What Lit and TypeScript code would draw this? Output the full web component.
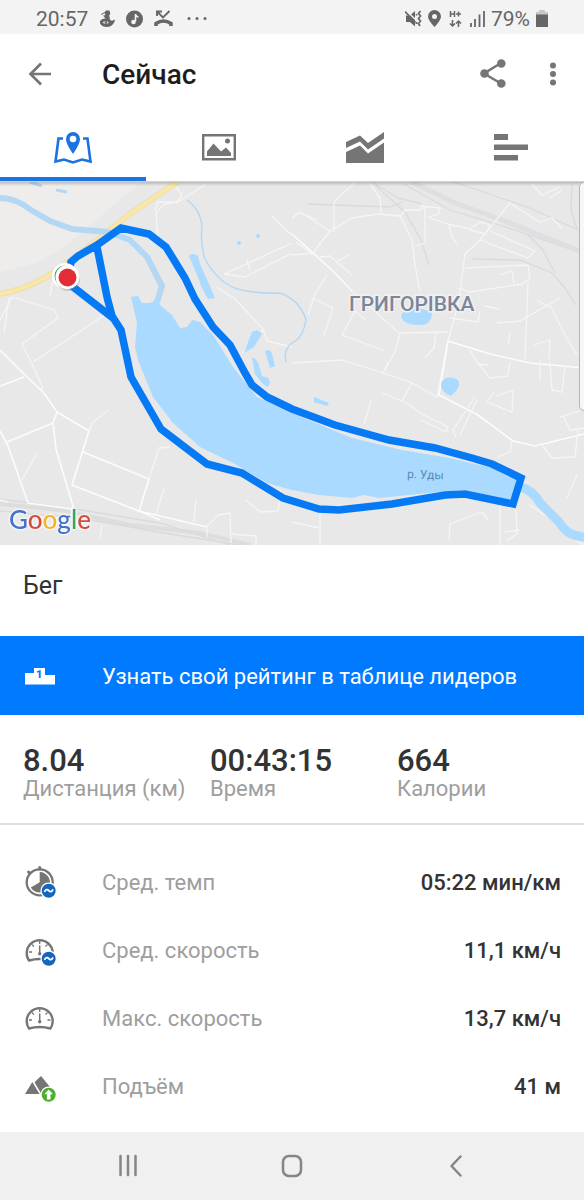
import { LitElement, html, svg, css } from "lit";
import { customElement, property } from "lit/decorators.js";

/* Speedometer body shared by the average and maximum speed rows. */
const gauge = svg`
  <path d="M6 26.500 A13 13 0 1 1 27.400 26.500 Q16.700 23.500 6 26.500 Z" fill="none" stroke="#757575" stroke-width="2.400" stroke-linejoin="round"/>
  <path d="M16.700 7v3M6 18h3M24.500 18h3M8.800 10.400l2.100 2.100M24.600 10.400l-2.100 2.100" stroke="#757575" stroke-width="1.300"/>
  <path d="M16.700 11.500V19" stroke="#757575" stroke-width="1.500"/><circle cx="16.700" cy="19.800" r="1.700" fill="#757575"/>`;

const averageBadge = svg`
  <circle cx="25.700" cy="24.700" r="8.300" fill="#fff"/><circle cx="25.700" cy="24.700" r="7" fill="#1565c0"/>
  <path d="M21.500 26c1-3 3-3 4.300-1.400s3 1.600 4.200-1.300" fill="none" stroke="#fff" stroke-width="1.700"/>`;

const icons: Record<string, unknown> = {
  pace: svg`
    <circle cx="16.700" cy="16.300" r="13" fill="none" stroke="#757575" stroke-width="2.300"/>
    <path d="M16.700 3V1.500M5.500 6 6.500 7" stroke="#757575" stroke-width="3" stroke-linecap="round"/>
    <path d="M16.700 16.300V6A10.300 10.300 0 1 1 7.800 21.500Z" fill="#757575"/>${averageBadge}`,
  avgSpeed: svg`${gauge}${averageBadge}`,
  maxSpeed: gauge,
  climb: svg`
    <path d="M2 24 9.300 12 16.600 24ZM11.500 12.300 18 6 29 19.500V24H18.500Z" fill="#757575"/>
    <circle cx="25.700" cy="24.700" r="8.300" fill="#fff"/><circle cx="25.700" cy="24.700" r="7" fill="#4caf2a"/>
    <path d="M25.700 19.500 30 24.200H27.500V29.500H23.900V24.200H21.400Z" fill="#fff"/>`,
};

@customElement("metric-row")
class MetricRow extends LitElement {
  @property() icon = "";
  @property() label = "";
  @property() value = "";

  static styles = css`
    :host { display: grid; grid-template-columns: 79px 1fr auto; align-items: center; height: 68px; padding: 0 23px; font-size: 22px; line-height: 28px; }
    svg { width: 34px; height: 34px; display: block; }
    .label { color: #9e9e9e; }
    .value { color: #333; font-weight: 500; }
  `;

  render() {
    return html`
      <svg viewBox="0 0 34 34" aria-hidden="true">${icons[this.icon]}</svg>
      <span class="label">${this.label}</span>
      <span class="value">${this.value}</span>`;
  }
}

@customElement("route-map")
class RouteMap extends LitElement {
  static styles = css`
    :host { display: block; position: relative; background: #e8e8e8; overflow: hidden; }
    .map { display: block; width: 100%; height: auto; }
    .road { fill: none; stroke: #f5f5f5; stroke-width: 1.3; stroke-linejoin: round; }
    .main { stroke: #fcfcfc; stroke-width: 1.6; }
    .rail { fill: none; stroke: #dadadc; stroke-width: 1.3; }
    .water { fill: #aadaff; }
    .river { fill: none; stroke: #b4d8f3; stroke-linejoin: round; }
    .route { fill: none; stroke: #067af5; stroke-width: 7.5; stroke-linejoin: miter; }
    .place { font: 500 21px Roboto, sans-serif; fill: #7b869b; stroke: #f1f1f1; stroke-width: 3; paint-order: stroke; }
    .lake { font: 400 12px Roboto, sans-serif; fill: #5d8cb5; }
    .logo { font: 500 26px Lato, sans-serif; filter: drop-shadow(0 0 1px #fff) drop-shadow(0 0 1px #fff); }
    .drawer { position: absolute; top: 0; right: -8px; width: 13px; height: 229px; box-sizing: border-box; background: #f7f7f7; border: 1px solid #b5b5b5; border-radius: 5px; }
    .shade { position: absolute; inset: 0 0 auto; height: 4px; background: linear-gradient(#0003, #0000); }
  `;

  render() {
    return html`
      <svg class="map" viewBox="0 182 584 363" role="img" aria-label="Карта маршрута">
        <path d="M0 182H141L100 217 60 250 36 263 0 272Z" fill="#eeedeb"/>
        <path class="rail" d="M372 182 398 198 422 204M376 186 405 212 421 240 429 265M308 204 390 207 402 202M404 184 450 210 500 225 584 254" />
        <path d="M412 182 455 203 505 221 584 253" fill="none" stroke="#dfdfe3" stroke-width="5"/>
        <path class="rail" d="M454 182 530 208 584 233M472 259 520 260 552 273 565 288 576 305M528 235 543 250 555 273M572 184 571 210 577 229"/>
        <path d="M0 504 60 510 130 525 200 533 250 545" fill="none" stroke="#dddddf" stroke-width="4"/>
        <path class="rail" d="M0 511 80 518 170 534 240 545M0 499 75 509 160 523 230 545"/>

        <path class="road" d="M0 320 12 297 54 310 58 318 22 344 32 364 43 388 41 391M33 362 108 313M9 298 4 333M50 297 52 284 58 279M155 210 158 202 177 202 182 195 176 187M158 240 156 212 165 204 178 202 206 184"/>
        <path class="road main" d="M0 350 10 360 27 377 43 392 57 412 89 431 72 485 139 511 207 527M0 386 24 377M7 442 53 423 57 412M53 423 56 449 73 506 71 517M0 431 8 446 28 503 73 509M83 452 149 479 139 511 160 520"/>
        <path class="road" d="M89 431 92 423 108 410M149 479 159 448 170 447M156 514 164 489M194 522 196 499M207 537V526L218 515 230 513 231 543M22 480 37 453M246 500 260 512 278 511 281 490M0 500 8 502M100 538 102 525M231 534 256 536 256 545"/>
        <path class="road" d="M217 287 235 299 263 329 267 341 292 347M224 274 292 243M224 274 245 277 292 253M247 260 250 270M243 353 263 330M272 216 286 230 292 235"/>
        <path class="road main" d="M292 234 335 273 352 291"/>
        <path class="road" d="M352 291 382 318 399 333 448 332M334 232 334 202 355 182M292 218 300 212 330 231 312 254 296 242M300 213 318 220M320 257 330 256 352 275M338 261 350 254M327 275 315 294 308 315M292 255 313 253M330 231 352 218 378 214 400 216 412 240 415 265 420 292M381 213 380 198 370 184M401 216 405 210 420 210 425 206 425 243 415 246M430 217 438 214 440 208 420 206M427 217 448 224 470 229 480 222 490 225 486 234 470 230M449 224 452 237 457 244M312 298 333 308 324 335M342 335 355 311 366 320M342 335 385 351M400 334 395 352 385 370M436 333 434 348 425 358"/>
        <path class="road" d="M511 202 480 240 465 254 459 300 448 341 437 397M480 240 528 258 535 251 490 231M465 268 528 265 530 278 522 284 470 292 458 288M500 275 512 271 514 284M484 306 500 309M450 318 478 322 480 311M528 282 525 360M520 321 497 323M520 321 560 298M537 300 550 308M550 305 565 335 577 355M508 345 510 333M534 345 550 340 549 360M470 350 478 364 488 365M508 202 540 222 552 218 562 229M532 184 542 195 560 187M550 198 562 190"/>
        <path class="road main" d="M448 341 439 395 478 415 513 441 535 446 584 434M448 341 490 354 530 363 584 368"/>
        <path class="road" d="M342 360 383 373 388 362M292 363 342 360M383 373 412 383 402 401M412 383 437 397M382 393 405 402 422 414 448 427 446 432 421 420M475 397 453 430 456 437M477 400 460 435M494 392 487 402 512 412 513 390 496 396M478 363 490 378 508 376 510 362M550 362 552 390 562 392 565 366M540 360 540 380M560 417 580 411M563 416 570 430 584 428M543 446 552 458 575 457 578 430M371 401 364 424M497 457 510 452 512 441M449 540 450 524 482 512 488 520M500 506 500 545M516 510 517 534 507 541M505 532 520 530M529 505 550 518 563 533 584 545M320 514 320 545M292 522 319 528M567 498 577 475"/>

        <path d="M0 294Q33 288 60 268L100 238 130 214 177 182" fill="none" stroke="#e9dfbd" stroke-width="6"/>
        <path d="M0 294Q33 288 60 268L100 238 130 214 177 182" fill="none" stroke="#fae7a3" stroke-width="4"/>

        <path class="river" d="M0 198Q16 198 31 210L50 221 72 229 108 232 130 240 147 257 162 286 157 302" stroke-width="6"/>
        <path class="river" d="M30 182 42 186M56 190 67 192" stroke-width="3"/>
        <path class="river" d="M187 200Q201 210 202 228 200 243 205 259 219 284 238 289 256 294 280 293 300 300 306 320 303 338 292 343 283 350 286 362 292 367C320 380 370 383 374 405L384 433M201 239 244 207M102 319C108 335 98 350 102 360 112 380 110 395 113 415 120 435 130 440 146 451" stroke-width="1.500"/>
        <path class="water" d="M131 297 138 296 142 303 150 303 157 299 161 306 172 315 180 328 187 327 192 320 200 322 213 335 233 367 257 397 292 413 352 438 402 450 449 458 492 468 517 480 511 500 465 490 439 492 379 498 364 495 352 498 319 495 292 490 267 483 233 463 200 447 173 423 153 397 138 360 135 347 137 323Z"/>
        <path class="water" d="M189 256Q193 252 198 256L200 264 209 284 215 298 208 299 202 288 195 270ZM252 332Q258 328 262 334L254 347 244 353ZM265 351Q270 348 272 354L275 366 270 368ZM252 357Q258 360 259 366L262 376 268 378Q272 384 267 387L262 383 255 374ZM401 317Q403 307 419 308L432 312Q432 325 420 325 405 326 401 317ZM441 387C440 376 453 376 458 380 461 386 457 390 451 396Q443 393 441 387ZM314 397 329 403 327 406 314 402Z"/>
        <circle class="water" cx="258" cy="236" r="2"/><circle class="water" cx="239" cy="243" r="2"/>
        <path d="M520 487Q533 490 540 503L559 522Q567 536 584 537" fill="none" stroke="#aadaff" stroke-width="9"/>

        <path class="route" d="M68 278 71 262 78 256 97 245 121 228 149 234 166 247 185 278 195 299 213 327 230 345 245 373 252 385 267 397 292 409 335 425 389 440 435 448 472 458 492 464 521 478 513 504 465 494 445 495 392 504 339 510 319 509 283 498 242 473 207 464 161 429 131 377 121 330 112 316 107 297 97 247"/>
        <path class="route" d="M68 283 113 318"/>
        <circle cx="65" cy="276" r="13" fill="#fff"/><circle cx="65" cy="276" r="9" fill="none" stroke="#43a564" stroke-width="3"/>
        <circle cx="68" cy="279" r="12" fill="#777" opacity=".3"/>
        <circle cx="67.500" cy="277" r="12" fill="#fff"/><circle cx="67.500" cy="277.500" r="9" fill="#e22d36"/>

        <text class="place" x="349" y="311">ГРИГОРІВКА</text>
        <text class="lake" x="407" y="478" transform="rotate(2 407 478)">р. Уды</text>
        <text class="logo" x="9" y="529"><tspan fill="#4472c9">G</tspan><tspan fill="#d64b3d">o</tspan><tspan fill="#f1b52b">o</tspan><tspan fill="#4472c9">g</tspan><tspan fill="#3aa757">l</tspan><tspan fill="#d64b3d">e</tspan></text>
      </svg>
      <div class="shade"></div>
      <div class="drawer"></div>`;
  }
}

@customElement("app-root")
class AppRoot extends LitElement {
  static styles = css`
    :host { display: flex; flex-direction: column; min-height: 100vh; background: #fff; color: #333; font-family: Roboto, sans-serif; }
    * { box-sizing: border-box; }
    svg { display: block; flex: none; }
    button { border: 0; padding: 0; margin: 0; background: none; font: inherit; color: inherit; cursor: pointer; }
    .status { display: flex; justify-content: space-between; align-items: center; height: 34px; padding: 3px 36px 0; background: #f3f3f3; color: #666; font-size: 21px; line-height: 28px; }
    .group { display: flex; align-items: center; }
    .notices { gap: 11px; }
    .signals { gap: 6px; }
    .bar { display: grid; grid-template-columns: 79px 1fr 64px 26px; align-items: center; height: 82px; padding: 0 18px 0 23px; }
    h1 { margin: 0; font-size: 28px; line-height: 36px; font-weight: 500; color: #1d1d1d; }
    .tabs { display: grid; grid-template-columns: repeat(4, 1fr); height: 66px; border-bottom: 1px solid #d2d2d2; }
    .tab { display: flex; align-items: center; justify-content: center; border-bottom: 4px solid transparent; padding-top: 2px; color: #757575; }
    .selected { color: #1a73e0; border-color: #1a73e8; }
    h2 { margin: 0; padding: 25px 23px 34px; font-size: 25px; line-height: 32px; font-weight: 400; }
    .leaders { display: grid; grid-template-columns: 79px 1fr; align-items: center; height: 79px; padding: 2px 23px 0; background: #007aff; color: #fff; font-size: 22px; line-height: 28px; text-align: left; }
    .podium { font: 900 11px Roboto, sans-serif; }
    .totals { display: grid; grid-template-columns: repeat(3, 1fr); margin: 0; padding: 29px 0 23px 23px; border-bottom: 2px solid #e0e0e0; }
    .total { display: flex; flex-direction: column-reverse; }
    dt { font-size: 22px; line-height: 22px; color: #9e9e9e; }
    dd { margin: 0; font-size: 31px; line-height: 34px; font-weight: 500; }
    .metrics { padding: 24px 0 10px; }
    .nav { display: grid; grid-template-columns: repeat(3, 164px); justify-content: center; height: 68px; margin-top: auto; background: #f0f0f0; color: #858585; }
    .key { display: flex; align-items: center; justify-content: center; }
  `;

  render() {
    return html`
      <div class="status">
        <div class="group notices">
          <span>20:57</span>
          <svg width="16" height="18" viewBox="0 0 16 18" fill="#666"><circle cx="8.500" cy="3" r="2.700"/><path d="M4 5.500 10 4.500 11 9.500Q13 12 15 9.500L16 10.500Q14 16.500 8 17 3 17 1 13.500V11Q3 8 6.500 8.500Z"/><path d="M3.500 12.500Q7 10 10 12.500 7 15 3.500 12.500" fill="#f3f3f3"/><circle cx="7" cy="12.500" r="1.300"/><path d="M2 4.500 6 2.500" stroke="#666"/></svg>
          <svg width="17" height="18" viewBox="0 0 17 18"><circle cx="8.500" cy="9" r="8.500" fill="#666"/><path d="M9.500 4v7.500M9.500 4.500q1 2.500 3 2.500" stroke="#f3f3f3" stroke-width="1.600" fill="none"/><circle cx="7.500" cy="12" r="2.300" fill="#f3f3f3"/></svg>
          <svg width="19" height="18" viewBox="0 0 19 18" fill="none" stroke="#666"><path d="M3 6V1.500H8M3.500 2 9 7.500 15.500 1" stroke-width="1.900"/><path d="M2 16V13.500Q9.500 8.500 17 13.500V16" stroke-width="3.500"/></svg>
          <svg width="26" height="18" viewBox="0 0 26 18" fill="#666"><circle cx="5" cy="8.500" r="1.500"/><circle cx="13" cy="8.500" r="1.500"/><circle cx="21" cy="8.500" r="1.500"/></svg>
        </div>
        <div class="group signals">
          <svg width="17" height="18" viewBox="0 0 17 18"><path d="M1 5.500H5L10 1V16.500L5 12H1Z" fill="#666"/><path d="M1.500 1 11 10" stroke="#f3f3f3" stroke-width="1.500"/><path d="M0 1.500 10.500 12.500" stroke="#666" stroke-width="1.800"/><path d="M15.500 1 13.500 3.500 15.500 6 13.500 8.500 15.500 11 13.500 13.500 15 16M11.500 4v1.500M11.500 12v2" fill="none" stroke="#666" stroke-width="1.700"/></svg>
          <svg width="13" height="18" viewBox="0 0 13 18"><path d="M6.500 0A6.500 6.500 0 0 1 13 6.500Q13 10 6.500 17 0 10 0 6.500A6.500 6.500 0 0 1 6.500 0Z" fill="#666"/><circle cx="6.500" cy="6.500" r="2.500" fill="#f3f3f3"/></svg>
          <svg width="17" height="18" viewBox="0 0 17 18" fill="none" stroke="#666" stroke-width="1.500"><path d="M3.500 1v6M7.500 1v6M3.500 4h4M9 4h5M11.500 1.500v5M5.500 10v6M3 13.500 5.500 16 8 13.500M11.500 17v-6M9 13.500 11.500 11 14 13.500"/></svg>
          <svg width="15" height="18" viewBox="0 0 15 18" stroke="#666" stroke-width="1.800"><path d="M1 13v4M5 9v8M9.500 4.500V17M14 1v16"/></svg>
          <span>79%</span>
          <svg width="12" height="18" viewBox="0 0 12 18"><path d="M3 0H9V2H12V5H0V2H3Z" fill="#c6c6c6"/><path d="M0 4.500H12V17H0Z" fill="#666"/></svg>
        </div>
      </div>

      <header class="bar">
        <button aria-label="Назад"><svg width="34" height="34" viewBox="0 0 34 34" fill="none" stroke="#757575" stroke-width="2.700"><path d="M28 16H8M18 5.500 7.500 16 18 26.500"/></svg></button>
        <h1>Сейчас</h1>
        <button aria-label="Поделиться"><svg width="34" height="34" viewBox="0 0 34 34" fill="#757575"><path d="M25 5 8 15.500 25 25.500" fill="none" stroke="#757575" stroke-width="2.500"/><circle cx="25.300" cy="5.500" r="4.300"/><circle cx="8.500" cy="15.500" r="4.300"/><circle cx="25.300" cy="25.500" r="4.300"/></svg></button>
        <button aria-label="Ещё"><svg width="26" height="34" viewBox="0 0 26 34" fill="#757575"><circle cx="13" cy="7.500" r="3"/><circle cx="13" cy="16" r="3"/><circle cx="13" cy="24.500" r="3"/></svg></button>
      </header>

      <div class="tabs" role="tablist">
        <button class="tab selected" role="tab" aria-selected="true" aria-label="Карта">
          <svg width="40" height="36" viewBox="0 0 40 36"><path d="M10 8.500H5.500L2.500 31.500 11 29.500 20 32.500 29 29.500 37.500 31.500 34.500 8.500H30" fill="none" stroke="currentColor" stroke-width="2.600"/><path d="M20 2A7 7 0 0 1 27 9Q27 14 20 24 13 14 13 9A7 7 0 0 1 20 2Z" fill="currentColor"/><circle cx="20" cy="9" r="3.300" fill="#fff"/></svg>
        </button>
        <button class="tab" role="tab" aria-label="Фото">
          <svg width="40" height="36" viewBox="0 0 40 36" fill="currentColor"><path d="M4.200 5.200H35.800V29.300H4.200Z" fill="none" stroke="currentColor" stroke-width="2.400"/><path d="M8 26V21.500L14.500 13.500 22 21.500 27 17.500 32 23V26Z"/><circle cx="28.500" cy="11" r="2.500"/></svg>
        </button>
        <button class="tab" role="tab" aria-label="Графики">
          <svg width="40" height="36" viewBox="0 0 40 36" fill="currentColor"><path d="M1 12 15 5.500 23 13 39 2V8.500L23 19.500 15 11.500 1 18ZM1 22 15 15.500 23 23.500 39 12.500V33H1Z"/></svg>
        </button>
        <button class="tab" role="tab" aria-label="Круги">
          <svg width="40" height="36" viewBox="0 0 40 36" fill="currentColor"><path d="M3 4H17V10H3ZM3 14.500H37V20H3ZM3 25H27V30.500H3Z"/></svg>
        </button>
      </div>

      <route-map></route-map>

      <h2>Бег</h2>

      <button class="leaders">
        <svg width="34" height="34" viewBox="0 0 34 34"><path d="M2 13H11V8H22V15H32V24.500H2Z" fill="#fff"/><text class="podium" x="13" y="18" fill="#007aff">1</text></svg>
        <span>Узнать свой рейтинг в таблице лидеров</span>
      </button>

      <dl class="totals">
        <div class="total"><dt>Дистанция (км)</dt><dd>8.04</dd></div>
        <div class="total"><dt>Время</dt><dd>00:43:15</dd></div>
        <div class="total"><dt>Калории</dt><dd>664</dd></div>
      </dl>

      <div class="metrics">
        <metric-row icon="pace" label="Сред. темп" value="05:22 мин/км"></metric-row>
        <metric-row icon="avgSpeed" label="Сред. скорость" value="11,1 км/ч"></metric-row>
        <metric-row icon="maxSpeed" label="Макс. скорость" value="13,7 км/ч"></metric-row>
        <metric-row icon="climb" label="Подъём" value="41 м"></metric-row>
      </div>

      <nav class="nav">
        <button class="key" aria-label="Недавние"><svg width="28" height="28" viewBox="0 0 28 28" fill="none" stroke="currentColor" stroke-width="2.500" stroke-linecap="round"><path d="M6.500 4v19M14 4v19M21.500 4v19"/></svg></button>
        <button class="key" aria-label="Домой"><svg width="28" height="28" viewBox="0 0 28 28" fill="none" stroke="currentColor" stroke-width="2.500"><rect x="5" y="4" width="18" height="20" rx="6"/></svg></button>
        <button class="key" aria-label="Назад"><svg width="28" height="28" viewBox="0 0 28 28" fill="none" stroke="currentColor" stroke-width="2.500" stroke-linecap="round" stroke-linejoin="round"><path d="M18.500 4.500 9.500 14 18.500 23.500"/></svg></button>
      </nav>`;
  }
}
